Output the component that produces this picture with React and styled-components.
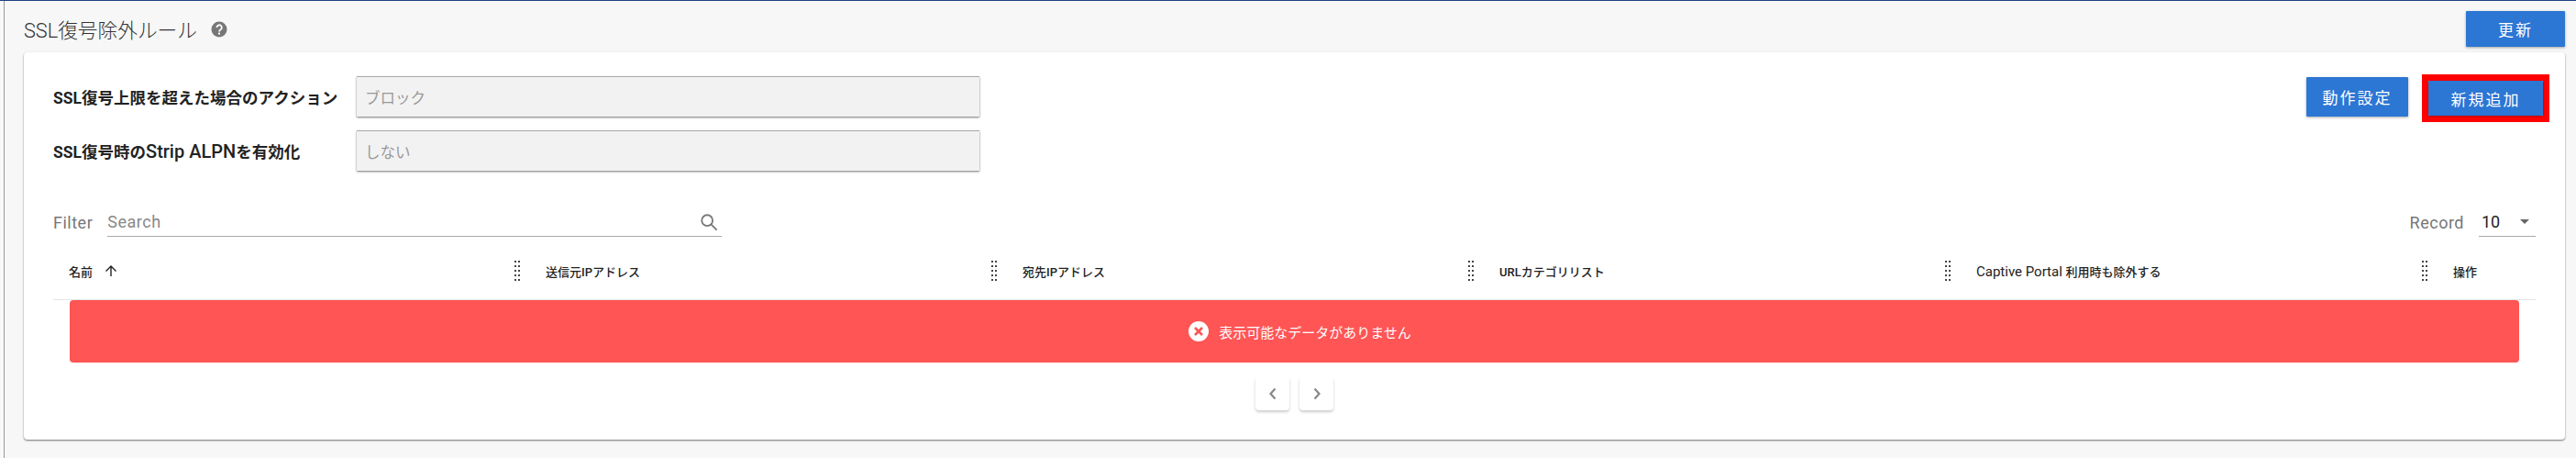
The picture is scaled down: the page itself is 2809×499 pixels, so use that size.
import React from 'react';
import styled, { createGlobalStyle } from 'styled-components';

const GlobalStyle = createGlobalStyle`
  html, body {
    margin: 0;
    padding: 0;
    background: #f9f9f9;
  }

  body {
    font-family: Roboto, "Noto Sans CJK JP", sans-serif;
    color: #222;
  }
`;

const Shell = styled.div`
  box-sizing: border-box;
  width: 2809px;
  height: 499px;
  border-top: 1px solid #1f3f85;
  overflow: hidden;
`;

const Page = styled.div`
  box-sizing: border-box;
  height: 498px;
  margin-left: 4px;
  padding: 11px 12px 0 21px;
  background: #f7f7f7;
  border-left: 1px solid #999;
`;

const Header = styled.div`
  display: flex;
  align-items: center;
  justify-content: space-between;
  height: 39px;
  margin-bottom: 6px;
`;

const TitleRow = styled.div`
  display: flex;
  align-items: center;
  gap: 15px;
`;

const Title = styled.h2`
  margin: 0;
  font-size: 21.7px;
  font-weight: 300;
  color: #333;
`;

const Button = styled.button`
  box-sizing: border-box;
  width: ${(p) => p.$width}px;
  height: ${(p) => p.$height}px;
  padding: 0;
  border: none;
  border-radius: 1px;
  background: #2c76d4;
  color: #fff;
  font-family: inherit;
  font-size: 17px;
  letter-spacing: 2px;
  box-shadow: 0 1px 3px rgba(0, 0, 0, 0.35);
`;

const OffsetButton = styled(Button)`
  margin-top: 3px;
`;

const Highlight = styled.div`
  border: 7px solid #f00;
  display: flex;
`;

const Card = styled.div`
  box-sizing: border-box;
  height: 422px;
  padding: 24px 17px 0 32px;
  background: #fff;
  border-radius: 4px;
  box-shadow: 0 1px 2px rgba(0, 0, 0, 0.55);
`;

const TopArea = styled.div`
  display: flex;
  justify-content: space-between;
  align-items: flex-start;
  height: 142px;
`;

const Settings = styled.div`
  display: flex;
  flex-direction: column;
  gap: 15px;
  padding-top: 2px;
`;

const SettingRow = styled.div`
  display: flex;
  align-items: center;
`;

const SettingLabel = styled.label`
  width: 331px;
  font-size: 17.5px;
  font-weight: 700;
  color: #222;
`;

const LabelLatin = styled.span`
  font-size: 20px;
  font-weight: 500;
`;

const ReadonlyField = styled.div`
  box-sizing: border-box;
  display: flex;
  align-items: center;
  width: 679px;
  height: 44px;
  padding-left: 9px;
  background: #f2f2f2;
  border-top: 1px solid #aaa;
  color: #999;
  font-size: 16.5px;
  box-shadow: 0 1px 2px rgba(0, 0, 0, 0.55);
`;

const Actions = styled.div`
  display: flex;
  align-items: flex-start;
  gap: 15px;
`;

const TableSection = styled.div`
  margin-right: 15px;
`;

const FilterBar = styled.div`
  display: flex;
  justify-content: space-between;
  align-items: flex-end;
  height: 35px;
`;

const FilterGroup = styled.div`
  display: flex;
  align-items: center;
  gap: 16px;
`;

const MutedLabel = styled.span`
  color: #777;
  font-size: 18px;
  letter-spacing: 0.5px;
`;

const SearchBox = styled.div`
  display: flex;
  align-items: center;
  justify-content: space-between;
  box-sizing: border-box;
  width: 670px;
  height: 32px;
  padding-right: 4px;
  border-bottom: 1px solid #aaa;
  color: #888;
  font-size: 18px;
  letter-spacing: 0.5px;
`;

const SelectBox = styled.div`
  display: flex;
  align-items: center;
  justify-content: space-between;
  box-sizing: border-box;
  width: 62px;
  height: 32px;
  padding: 0 7px 0 3px;
  border-bottom: 1px solid #aaa;
  color: #222;
  font-size: 18px;
`;

const Caret = styled.span`
  width: 0;
  height: 0;
  border-left: 5px solid transparent;
  border-right: 5px solid transparent;
  border-top: 5px solid #666;
`;

const TableHead = styled.div`
  box-sizing: border-box;
  display: flex;
  height: 69px;
  padding-top: 6px;
  border-bottom: 1px solid #e4e4e4;
`;

const HeadCell = styled.div`
  box-sizing: border-box;
  display: flex;
  align-items: center;
  justify-content: space-between;
  width: ${(p) => p.$width}px;
  padding: 0 11px 0 17px;
  font-size: 13px;
  font-weight: 500;
  color: #222;
`;

const HeadLabel = styled.span`
  display: flex;
  align-items: center;
  gap: 13px;
`;

const LatinText = styled.span`
  font-size: 15px;
  font-weight: 400;
  white-space: pre;
`;

const ErrorBanner = styled.div`
  display: flex;
  align-items: center;
  justify-content: center;
  gap: 11px;
  height: 68px;
  margin: 0 18px;
  padding-left: 12px;
  background: #ff5555;
  border-radius: 4px;
  color: #fff;
  font-size: 15px;
`;

const Pager = styled.div`
  display: flex;
  justify-content: center;
  gap: 11px;
  margin-top: 15px;
`;

const PagerButton = styled.button`
  display: flex;
  align-items: center;
  justify-content: center;
  width: 37px;
  height: 37px;
  padding: 0;
  border: none;
  border-radius: 4px;
  background: #fff;
  box-shadow: 0 2px 3px rgba(0, 0, 0, 0.2);
`;

const HelpIcon = () => (
  <svg width="18" height="18" viewBox="0 0 18 18">
    <circle cx="9" cy="9" r="8.5" fill="#777" />
    <path d="M6.4 7a2.7 2.7 0 1 1 4.2 2.2c-1 .7-1.6 1.1-1.6 2.2" fill="none" stroke="#fff" strokeWidth="1.8" />
    <rect x="8" y="12.6" width="2" height="2" fill="#fff" />
  </svg>
);

const SearchIcon = () => (
  <svg width="20" height="20" viewBox="0 0 22 22" fill="none" stroke="#777" strokeWidth="2">
    <circle cx="9" cy="9" r="6.5" />
    <path d="M13.5 13.5 20.5 20.5" />
  </svg>
);

const GripIcon = () => (
  <svg width="6" height="22" viewBox="0 0 6 22" fill="#444">
    {[0, 5, 10, 15, 20].map((y) => (
      <React.Fragment key={y}>
        <rect x="0" y={y} width="2" height="2" />
        <rect x="4" y={y} width="2" height="2" />
      </React.Fragment>
    ))}
  </svg>
);

const ArrowUpIcon = () => (
  <svg width="14" height="14" viewBox="0 0 14 14" fill="none" stroke="#222" strokeWidth="1.4">
    <path d="M7 13V2M1.5 7.5 7 2l5.5 5.5" />
  </svg>
);

const ErrorIcon = () => (
  <svg width="22" height="22" viewBox="0 0 22 22">
    <circle cx="11" cy="11" r="11" fill="#fff" />
    <path d="M7 7l8 8M15 7l-8 8" stroke="#ff5555" strokeWidth="2.6" />
  </svg>
);

const ChevronIcon = ({ d }) => (
  <svg width="12" height="16" viewBox="0 0 12 16" fill="none" stroke="#888" strokeWidth="2.2">
    <path d={d} />
  </svg>
);

const columns = [
  { id: 'name', label: '名前', width: 520, sorted: true },
  { id: 'src', label: '送信元IPアドレス', width: 520 },
  { id: 'dst', label: '宛先IPアドレス', width: 520 },
  { id: 'url', label: 'URLカテゴリリスト', width: 520 },
  { id: 'portal', latin: 'Captive Portal ', label: '利用時も除外する', width: 520 },
  { id: 'ops', label: '操作', width: 107, last: true },
];

const App = () => {
  return (
    <>
      <GlobalStyle />
      <Shell>
        <Page>
          <Header>
            <TitleRow>
              <Title>SSL復号除外ルール</Title>
              <HelpIcon />
            </TitleRow>
            <Button $width={108} $height={39}>更新</Button>
          </Header>
          <Card>
            <TopArea>
              <Settings>
                <SettingRow>
                  <SettingLabel>SSL復号上限を超えた場合のアクション</SettingLabel>
                  <ReadonlyField>ブロック</ReadonlyField>
                </SettingRow>
                <SettingRow>
                  <SettingLabel>SSL復号時の<LabelLatin>Strip ALPN</LabelLatin>を有効化</SettingLabel>
                  <ReadonlyField>しない</ReadonlyField>
                </SettingRow>
              </Settings>
              <Actions>
                <OffsetButton $width={111} $height={43}>動作設定</OffsetButton>
                <Highlight>
                  <Button $width={125} $height={38}>新規追加</Button>
                </Highlight>
              </Actions>
            </TopArea>
            <TableSection>
              <FilterBar>
                <FilterGroup>
                  <MutedLabel>Filter</MutedLabel>
                  <SearchBox>
                    Search
                    <SearchIcon />
                  </SearchBox>
                </FilterGroup>
                <FilterGroup>
                  <MutedLabel>Record</MutedLabel>
                  <SelectBox>
                    10
                    <Caret />
                  </SelectBox>
                </FilterGroup>
              </FilterBar>
              <TableHead>
                {columns.map((col) => (
                  <HeadCell key={col.id} $width={col.width}>
                    <HeadLabel>
                      <span>
                        {col.latin && <LatinText>{col.latin}</LatinText>}
                        {col.label}
                      </span>
                      {col.sorted && <ArrowUpIcon />}
                    </HeadLabel>
                    {!col.last && <GripIcon />}
                  </HeadCell>
                ))}
              </TableHead>
              <ErrorBanner>
                <ErrorIcon />
                表示可能なデータがありません
              </ErrorBanner>
              <Pager>
                <PagerButton><ChevronIcon d="M8.5 2.5 3.5 8l5 5.5" /></PagerButton>
                <PagerButton><ChevronIcon d="M3.5 2.5 8.5 8l-5 5.5" /></PagerButton>
              </Pager>
            </TableSection>
          </Card>
        </Page>
      </Shell>
    </>
  );
};

export default App;
